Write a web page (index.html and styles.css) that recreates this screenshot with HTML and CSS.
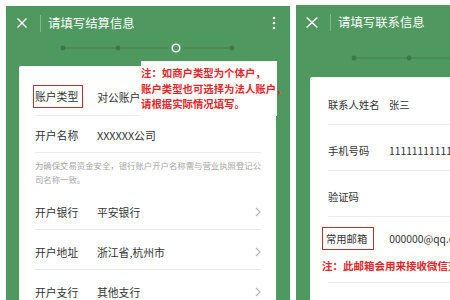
FILE: index.html
```html
<!DOCTYPE html>
<html lang="zh-CN">
<head>
    <meta charset="UTF-8">
    <meta name="viewport" content="width=device-width, initial-scale=1.0">
    <title>填写信息</title>
    <link rel="stylesheet" href="styles.css">
</head>
<body>

<div class="screens">

    <section class="phone phone-left">
        <header class="bar">
            <svg class="close" width="10" height="10" viewBox="0 0 10 10"><path d="M0.5 0.5 L9.5 9.5 M9.5 0.5 L0.5 9.5" stroke="#fff" stroke-width="1.4"/></svg>
            <span class="divider"></span>
            <h1 class="title">请填写结算信息</h1>
            <svg class="more" width="4" height="14" viewBox="0 0 4 14"><circle cx="2" cy="2" r="1.3" fill="#fff"/><circle cx="2" cy="7" r="1.3" fill="#fff"/><circle cx="2" cy="12" r="1.3" fill="#fff"/></svg>
        </header>
        <div class="steps">
            <svg width="284" height="16" viewBox="0 0 284 16">
                <line x1="57" y1="8" x2="226" y2="8" stroke="#3f7f50" stroke-width="1"/>
                <circle cx="57" cy="8" r="2.4" fill="#3a784a"/>
                <circle cx="112" cy="8" r="2.4" fill="#3a784a"/>
                <circle cx="170" cy="8" r="3.8" fill="#4f9860" stroke="#fff" stroke-width="1.5"/>
                <circle cx="226" cy="8" r="2.4" fill="#3a784a"/>
            </svg>
        </div>
        <div class="card">
            <div class="row row-type">
                <span class="label marked">账户类型</span>
                <span class="value">对公账户</span>
            </div>
            <div class="row row-name">
                <span class="label">开户名称</span>
                <span class="value">XXXXXX公司</span>
            </div>
            <p class="hint">为确保交易资金安全，银行账户开户名称需与营业执照登记公<br>司名称一致。</p>
            <div class="row row-pick">
                <span class="label">开户银行</span>
                <span class="value">平安银行</span>
                <svg class="chevron" width="6" height="10" viewBox="0 0 6 10"><path d="M1 1 L5 5 L1 9" fill="none" stroke="#b5b5b5" stroke-width="1.2"/></svg>
            </div>
            <div class="row row-pick">
                <span class="label">开户地址</span>
                <span class="value">浙江省,杭州市</span>
                <svg class="chevron" width="6" height="10" viewBox="0 0 6 10"><path d="M1 1 L5 5 L1 9" fill="none" stroke="#b5b5b5" stroke-width="1.2"/></svg>
            </div>
            <div class="row row-pick">
                <span class="label">开户支行</span>
                <span class="value">其他支行</span>
                <svg class="chevron" width="6" height="10" viewBox="0 0 6 10"><path d="M1 1 L5 5 L1 9" fill="none" stroke="#b5b5b5" stroke-width="1.2"/></svg>
            </div>

            <div class="note">注：如商户类型为个体户，<br>账户类型也可选择为法人账户，<br>请根据实际情况填写。</div>
        </div>
    </section>

    <section class="phone phone-right">
        <header class="bar">
            <svg class="close" width="12" height="11" viewBox="0 0 12 11"><path d="M0.6 0.5 L11.4 10.5 M11.4 0.5 L0.6 10.5" stroke="#fff" stroke-width="1.4"/></svg>
            <span class="divider"></span>
            <h1 class="title">请填写联系信息</h1>
        </header>
        <div class="steps steps-tall">
            <svg width="160" height="16" viewBox="0 0 160 16">
                <line x1="58" y1="8" x2="160" y2="8" stroke="#3f7f50" stroke-width="1"/>
                <circle cx="58" cy="8" r="2.4" fill="#3a784a"/>
                <circle cx="113" cy="8" r="2.4" fill="#3a784a"/>
            </svg>
        </div>
        <div class="card card-contact">
            <div class="row row-contact first">
                <span class="label">联系人姓名</span>
                <span class="value">张三</span>
            </div>
            <div class="row row-contact">
                <span class="label">手机号码</span>
                <span class="value">11111111111</span>
            </div>
            <div class="row row-contact">
                <span class="label">验证码</span>
            </div>
            <div class="row row-mail">
                <div class="mail-line">
                    <span class="label marked">常用邮箱</span>
                    <span class="value">000000@qq.com</span>
                </div>
                <p class="mail-note">注：此邮箱会用来接收微信支付的通知邮件</p>
            </div>
            <div class="row row-contact"></div>
        </div>
    </section>

</div>

</body>
</html>
```

FILE: styles.css
```css
body {
    margin: 0;
    background: #fff;
    font-family: "Noto Sans CJK SC", "Noto Sans", "Liberation Sans", sans-serif;
    overflow: hidden;
    height: 300px;
}
.screens {
    display: flex;
    gap: 6px;
    padding-left: 6px;
    width: 460px;
}
.phone {
    background: #4f9860;
    height: 320px;
    display: flex;
    flex-direction: column;
}
.phone-left {
    width: 284px;
    flex: none;
    margin-top: 6px;
}
.phone-right {
    flex: none;
    width: 170px;
    margin-top: 5px;
}
.bar {
    height: 34px;
    display: flex;
    align-items: center;
    padding: 0 14px 0 11px;
}
.phone-right .bar {
    padding-left: 10px;
}
.close {
    flex: none;
}
.divider {
    width: 1px;
    height: 17px;
    background: rgba(255, 255, 255, 0.3);
    margin: 0 7px 0 13px;
}
.phone-right .divider {
    margin-left: 12px;
}
.title {
    margin: 0;
    font-size: 12.4px;
    font-weight: 400;
    color: #fff;
    white-space: nowrap;
}
.more {
    margin-left: auto;
}
.steps {
    height: 16px;
}
.steps svg {
    display: block;
}
.steps-tall {
    height: 38px;
    display: flex;
    align-items: center;
}
.card {
    position: relative;
    flex: 1;
    background: #fff;
    margin: 10px 14px 0 13px;
    padding: 0 15px 0 16px;
    border-radius: 2px;
}
.card-contact {
    margin: 0 0 0 14px;
    padding: 8px 0 0 18px;
}
.row {
    display: flex;
    align-items: center;
    font-size: 10.8px;
    line-height: 18px;
    color: #333;
    border-bottom: 1px solid #ececec;
}
.label {
    width: 62px;
    flex: none;
    white-space: nowrap;
}
.value {
    white-space: nowrap;
    overflow: hidden;
}
.marked {
    width: auto;
    margin: 0 0 0 -2px;
    padding: 2px 4px 2px 1px;
    border: 1.5px solid #b8312f;
    line-height: 17px;
}
.row-type {
    padding: 19px 0 7px;
}
.row-type .marked {
    margin-right: 14px;
}
.row-name {
    padding: 10px 0 8px;
}
.hint {
    margin: 0;
    padding: 5px 0 4px;
    font-size: 8.4px;
    line-height: 14px;
    color: #a6a6a6;
    white-space: nowrap;
}
.row-pick {
    padding: 13px 0 8px;
}
.row-pick:last-of-type {
    border-bottom: none;
}
.chevron {
    margin-left: auto;
    flex: none;
}
.note {
    position: absolute;
    left: 122px;
    top: -5px;
    width: 136px;
    padding: 4px 0 4px;
    background: #fff;
    color: #e3262b;
    font-size: 10.4px;
    line-height: 15.5px;
    font-weight: 700;
    white-space: nowrap;
}
.row-contact {
    padding: 17px 0 10px;
    font-size: 10.3px;
}
.row-contact.first {
    padding: 11px 0 10px;
}
.row-contact .label {
    width: 61px;
}
.row-mail {
    display: block;
    padding: 10px 0 8px;
    font-size: 10.3px;
}
.mail-line {
    display: flex;
    align-items: center;
}
.mail-line .marked {
    margin: 0 15px 0 -6px;
    padding: 2px 6px 2px 3px;
}
.mail-note {
    margin: 8px 0 0 -6px;
    color: #e3262b;
    font-size: 10.5px;
    line-height: 16px;
    font-weight: 700;
    white-space: nowrap;
}
```
